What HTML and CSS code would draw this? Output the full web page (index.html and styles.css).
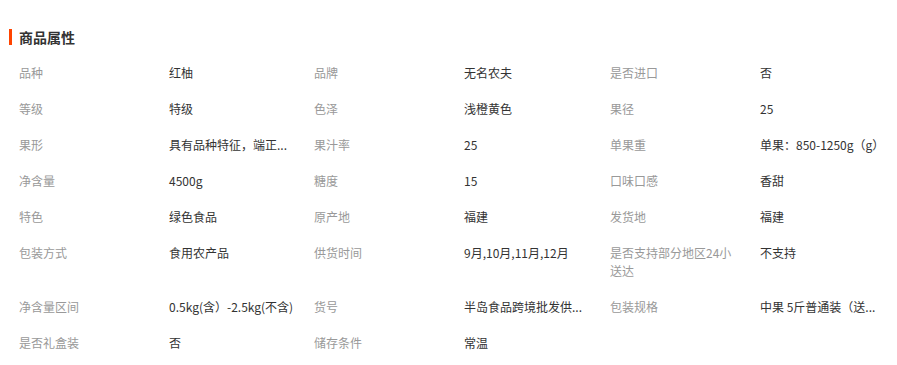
FILE: index.html
```html
<!DOCTYPE html>
<html lang="zh-CN">
<head>
<meta charset="utf-8">
<title>商品属性</title>
<link rel="stylesheet" href="styles.css">
</head>
<body>
<div class="attrs">
  <h2 class="title">商品属性</h2>
  <div class="grid">
    <div class="k"><span>品种</span></div><div class="v"><span>红柚</span></div>
    <div class="k"><span>品牌</span></div><div class="v"><span>无名农夫</span></div>
    <div class="k"><span>是否进口</span></div><div class="v"><span>否</span></div>

    <div class="k"><span>等级</span></div><div class="v"><span>特级</span></div>
    <div class="k"><span>色泽</span></div><div class="v"><span>浅橙黄色</span></div>
    <div class="k"><span>果径</span></div><div class="v"><span>25</span></div>

    <div class="k"><span>果形</span></div><div class="v"><span>具有品种特征，端正...</span></div>
    <div class="k"><span>果汁率</span></div><div class="v"><span>25</span></div>
    <div class="k"><span>单果重</span></div><div class="v"><span>单果：850-1250g（g）</span></div>

    <div class="k"><span>净含量</span></div><div class="v"><span>4500g</span></div>
    <div class="k"><span>糖度</span></div><div class="v"><span>15</span></div>
    <div class="k"><span>口味口感</span></div><div class="v"><span>香甜</span></div>

    <div class="k"><span>特色</span></div><div class="v"><span>绿色食品</span></div>
    <div class="k"><span>原产地</span></div><div class="v"><span>福建</span></div>
    <div class="k"><span>发货地</span></div><div class="v"><span>福建</span></div>

    <div class="k"><span>包装方式</span></div><div class="v"><span>食用农产品</span></div>
    <div class="k"><span>供货时间</span></div><div class="v"><span>9月,10月,11月,12月</span></div>
    <div class="k"><span class="wrap">是否支持部分地区24小送达</span></div><div class="v"><span>不支持</span></div>

    <div class="k"><span>净含量区间</span></div><div class="v"><span>0.5kg(含）-2.5kg(不含)</span></div>
    <div class="k"><span>货号</span></div><div class="v"><span>半岛食品跨境批发供...</span></div>
    <div class="k"><span>包装规格</span></div><div class="v"><span>中果 5斤普通装（送...</span></div>

    <div class="k"><span>是否礼盒装</span></div><div class="v"><span>否</span></div>
    <div class="k"><span>储存条件</span></div><div class="v"><span>常温</span></div>
    <div class="k"><span></span></div><div class="v"><span></span></div>
  </div>
</div>
</body>
</html>
```

FILE: styles.css
```css
html, body {
  margin: 0;
  padding: 0;
  background: #fff;
}
body {
  font-family: "Noto Sans CJK SC", "Microsoft YaHei", "Noto Sans", sans-serif;
  font-size: 12px;
  color: #333;
}
.attrs {
  padding-top: 29px;
}
.title {
  margin: 0 0 10px 9px;
  padding-left: 7px;
  border-left: 3px solid #ff4400;
  font-size: 14px;
  font-weight: bold;
  line-height: 16px;
  height: 16px;
  color: #333;
  display: flex;
  align-items: center;
}
.grid {
  display: grid;
  grid-template-columns: 150px 145px 150px 146px 150px 1fr;
  padding-left: 19px;
}
.k, .v {
  padding: 9px 0;
  line-height: 18px;
}
.k { color: #999; }
.v { color: #333; }
.k span, .v span {
  display: block;
  white-space: nowrap;
}
.k span.wrap {
  width: 122px;
  white-space: normal;
}
```
